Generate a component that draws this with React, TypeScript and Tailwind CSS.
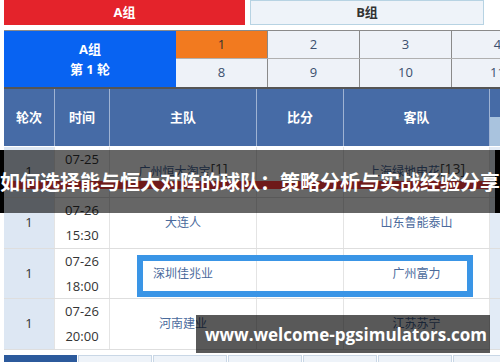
import React from 'react';

type Match = {
  round: string;
  date: string;
  time: string;
  home: string;
  homeRank?: string;
  away: string;
  awayRank?: string;
};

const matches: Match[] = [
  { round: '1', date: '07-25', time: '19:35', home: '广州恒大淘宝', homeRank: '[1]', away: '上海绿地申花', awayRank: '[13]' },
  { round: '1', date: '07-26', time: '15:30', home: '大连人', away: '山东鲁能泰山' },
  { round: '1', date: '07-26', time: '18:00', home: '深圳佳兆业', away: '广州富力' },
  { round: '1', date: '07-26', time: '20:00', home: '河南建业', away: '江苏苏宁' },
];

const rounds = [
  ['1', '2', '3', '4'],
  ['8', '9', '10', '11'],
];

const MatchRow: React.FC<{ m: Match; tall?: boolean }> = ({ m, tall }) => {
  return (
    <div className={`flex border-b border-[#dedede] ${tall ? 'h-[51px]' : 'h-[50px]'}`}>
      <div className="w-[51px] shrink-0 flex items-center justify-center bg-[#dde7f3] border-r border-[#e4e4e4] text-[13px] text-[#333]">
        {m.round}
      </div>
      <div className="w-[55px] shrink-0 flex flex-col items-center justify-center border-r border-[#e4e4e4] text-[13px] leading-[25px] text-[#333]">
        <span>{m.date}</span>
        <span>{m.time}</span>
      </div>
      <div className="w-[147px] shrink-0 flex items-center justify-center border-r border-[#e4e4e4] text-[12px] text-[#4a6a9c]">
        <span>{m.home}</span>
        {m.homeRank && <span className="text-[14px] text-[#444] -translate-y-[4px]">{m.homeRank}</span>}
      </div>
      <div className="w-[87px] shrink-0 border-r border-[#e4e4e4]" />
      <div className="w-[146px] shrink-0 flex items-center justify-center border-r border-[#e4e4e4] text-[12px] text-[#4a6a9c]">
        <span>{m.away}</span>
        {m.awayRank && <span className="text-[14px] text-[#444] -translate-y-[4px]">{m.awayRank}</span>}
      </div>
      <div className="flex-1 bg-[#e2ebf6]" />
    </div>
  );
};

export default function App() {
  return (
    <div className="relative w-[500px] h-[362px] overflow-hidden bg-white font-['Open_Sans','Noto_Sans_CJK_SC',sans-serif]">
      <div className="pl-1">
        {/* group tabs */}
        <div className="flex h-[25px]">
          <div className="w-[241px] shrink-0 bg-[#e4232b] flex items-center justify-center text-white font-bold text-[13px]">
            A组
          </div>
          <div className="ml-[5px] w-[234px] shrink-0 bg-[#eef3f9] border border-[#b7d3e3] flex items-center justify-center text-[#333] font-bold text-[13px]">
            B组
          </div>
        </div>

        {/* round picker */}
        <div className="mt-[5px] flex h-[59px] border-t border-[#8a8a8a] border-b-2 border-b-[#555]">
          <div className="w-[172px] shrink-0 bg-[#0863f2] flex flex-col items-center justify-center gap-[7px] text-white font-bold text-[13px] leading-none">
            <span>A组</span>
            <span>第 1 轮</span>
          </div>
          <div className="flex-1 min-w-0 overflow-hidden flex flex-col">
            {rounds.map((row, r) => (
              <div key={r} className={`flex h-[28px] ${r === 0 ? 'border-b border-[#b0b0b0]' : ''}`}>
                {row.map((n, i) => (
                  <div
                    key={n}
                    className={`shrink-0 w-[92px] flex items-center justify-center text-[13px] border-r border-[#8a8a8a] ${
                      r === 0 && i === 0 ? 'bg-[#f27a1f] text-[#333]' : 'bg-[#eef2f8] text-[#3b4f6e]'
                    }`}
                  >
                    {n}
                  </div>
                ))}
              </div>
            ))}
          </div>
        </div>

        {/* table header */}
        <div className="flex h-[57px] bg-[#466ba6] text-white font-bold text-[13px]">
          <div className="w-[51px] shrink-0 flex items-center justify-center border-r border-[#9fb3d3]">轮次</div>
          <div className="w-[55px] shrink-0 flex items-center justify-center border-r border-[#9fb3d3]">时间</div>
          <div className="w-[147px] shrink-0 flex items-center justify-center border-r border-[#9fb3d3]">主队</div>
          <div className="w-[87px] shrink-0 flex items-center justify-center border-r border-[#9fb3d3]">比分</div>
          <div className="w-[146px] shrink-0 flex items-center justify-center border-r border-[#9fb3d3]">客队</div>
          <div className="flex-1 flex flex-col">
            <div className="h-[28px]" />
            <div className="flex-1 bg-[#a9c3de]" />
          </div>
        </div>

        <div className="h-[1px]" />

        {matches.map((m, i) => (
          <MatchRow key={i} m={m} tall={i !== 2} />
        ))}

        {/* bottom tabs */}
        <div className="mt-[5px] flex gap-[1px] h-[10px]">
          <div className="w-[73px] shrink-0 bg-[#2c5a9c]" />
          {[0, 1, 2, 3, 4, 5].map(i => (
            <div key={i} className="shrink-0 w-[74px] bg-[#eef3f9] border border-[#c9d7e6]" />
          ))}
        </div>
      </div>

      {/* highlight frame */}
      <div className="absolute left-[137px] top-[255px] w-[336px] h-[42px] border-[6px] border-[#3a95e6]" />

      {/* title banner */}
      <div className="absolute left-0 right-0 top-[150px] h-[63px] bg-black/60">
        <div className="absolute left-0 top-0 bottom-0 w-[4px] bg-black" />
        <div className="absolute right-0 top-0 bottom-0 w-[5px] bg-black" />
        <div className="absolute left-[4px] top-[31px] w-[486px] h-[8px] bg-[#6e1a1a]" />
        <div className="absolute left-0 right-0 top-[19px] whitespace-nowrap text-white font-bold text-[20px] leading-[26px] font-['Noto_Sans_CJK_SC',sans-serif]">
          如何选择能与恒大对阵的球队：策略分析与实战经验分享
        </div>
      </div>

      {/* watermark */}
      <div className="absolute left-[196px] top-[315px] w-[294px] h-[38px] bg-black/65 flex items-center pl-[9px]">
        <span className="text-white font-bold text-[17px] leading-none whitespace-nowrap">www.welcome-pgsimulators.com</span>
      </div>
    </div>
  );
}
